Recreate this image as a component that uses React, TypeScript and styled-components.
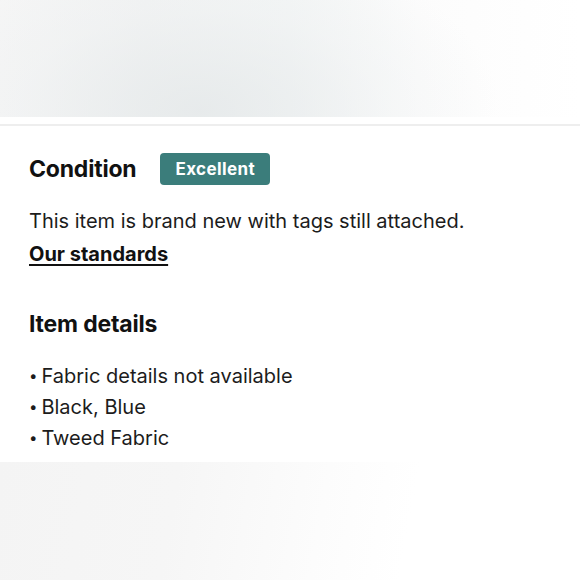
import styled, { createGlobalStyle } from "styled-components";

const Global = createGlobalStyle`
  html, body {
    margin: 0;
    padding: 0;
    background: #ffffff;
  }
  body {
    font-family: "Inter", "Liberation Sans", sans-serif;
    color: #1a1a1a;
  }
`;

const Page = styled.div`
  width: 580px;
  height: 580px;
  overflow: hidden;
  display: flex;
  flex-direction: column;
  background: #ffffff;
  position: relative;
`;

const TopBlur = styled.div`
  height: 117px;
  flex-shrink: 0;
  background:
    radial-gradient(ellipse 300px 170px at 200px 110px, rgba(228, 232, 233, 0.8), rgba(236, 239, 240, 0.4) 60%, rgba(255, 255, 255, 0) 100%),
    linear-gradient(90deg, #f6f6f6 0%, #f2f3f3 25%, #f4f6f6 50%, #fcfcfc 72%, #ffffff 100%);
`;

const Divider = styled.div`
  margin-top: 7px;
  height: 2px;
  background: #eeeeee;
  flex-shrink: 0;
`;

const Content = styled.div`
  padding: 0 29px;
  flex: 1;
  display: flex;
  flex-direction: column;
`;

const HeadRow = styled.div`
  display: flex;
  align-items: center;
  gap: 23px;
  margin-top: 27px;
`;

const Heading = styled.h2`
  margin: 0;
  font-size: 23px;
  font-weight: 700;
  letter-spacing: -0.2px;
  color: #111111;
`;

const Badge = styled.span`
  display: inline-flex;
  align-items: center;
  height: 32px;
  padding: 0 15px;
  margin-left: 1px;
  border-radius: 4px;
  background: #3b7d7b;
  color: #ffffff;
  font-size: 17px;
  font-weight: 700;
  letter-spacing: 0.4px;
`;

const Text = styled.p`
  margin: 24px 0 0;
  font-size: 20px;
  font-weight: 400;
  line-height: 24px;
  color: #1c1c1c;
`;

const LinkRow = styled.div`
  margin-top: 9px;
  line-height: 24px;
`;

const Link = styled.a`
  font-size: 20px;
  font-weight: 700;
  color: #111111;
  text-decoration: underline;
  text-underline-offset: 3px;
  text-decoration-thickness: 2px;
`;

const Section = styled.div`
  margin-top: 43px;
`;

const List = styled.ul`
  list-style: none;
  margin: 23px 0 0;
  padding: 0;
`;

const Item = styled.li`
  font-size: 20px;
  line-height: 31px;
  height: 31px;
  color: #1c1c1c;
  &::before {
    content: "•";
    margin-right: 4px;
    font-size: 15px;
    line-height: 1;
    vertical-align: 2px;
  }
`;

const BottomBlur = styled.div`
  position: absolute;
  left: 0;
  top: 462px;
  width: 580px;
  height: 118px;
  background: linear-gradient(100deg, #f4f4f4 0%, #f6f6f6 30%, #fcfcfc 55%, #ffffff 70%, #ffffff 100%);
`;

export default function App() {
  return (
    <>
      <Global />
      <Page>
        <TopBlur />
        <Divider />
        <Content>
          <HeadRow>
            <Heading>Condition</Heading>
            <Badge>Excellent</Badge>
          </HeadRow>
          <Text>This item is brand new with tags still attached.</Text>
          <LinkRow>
            <Link>Our standards</Link>
          </LinkRow>
          <Section>
            <Heading>Item details</Heading>
            <List>
              <Item>Fabric details not available</Item>
              <Item>Black, Blue</Item>
              <Item>Tweed Fabric</Item>
            </List>
          </Section>
        </Content>
        <BottomBlur />
      </Page>
    </>
  );
}
